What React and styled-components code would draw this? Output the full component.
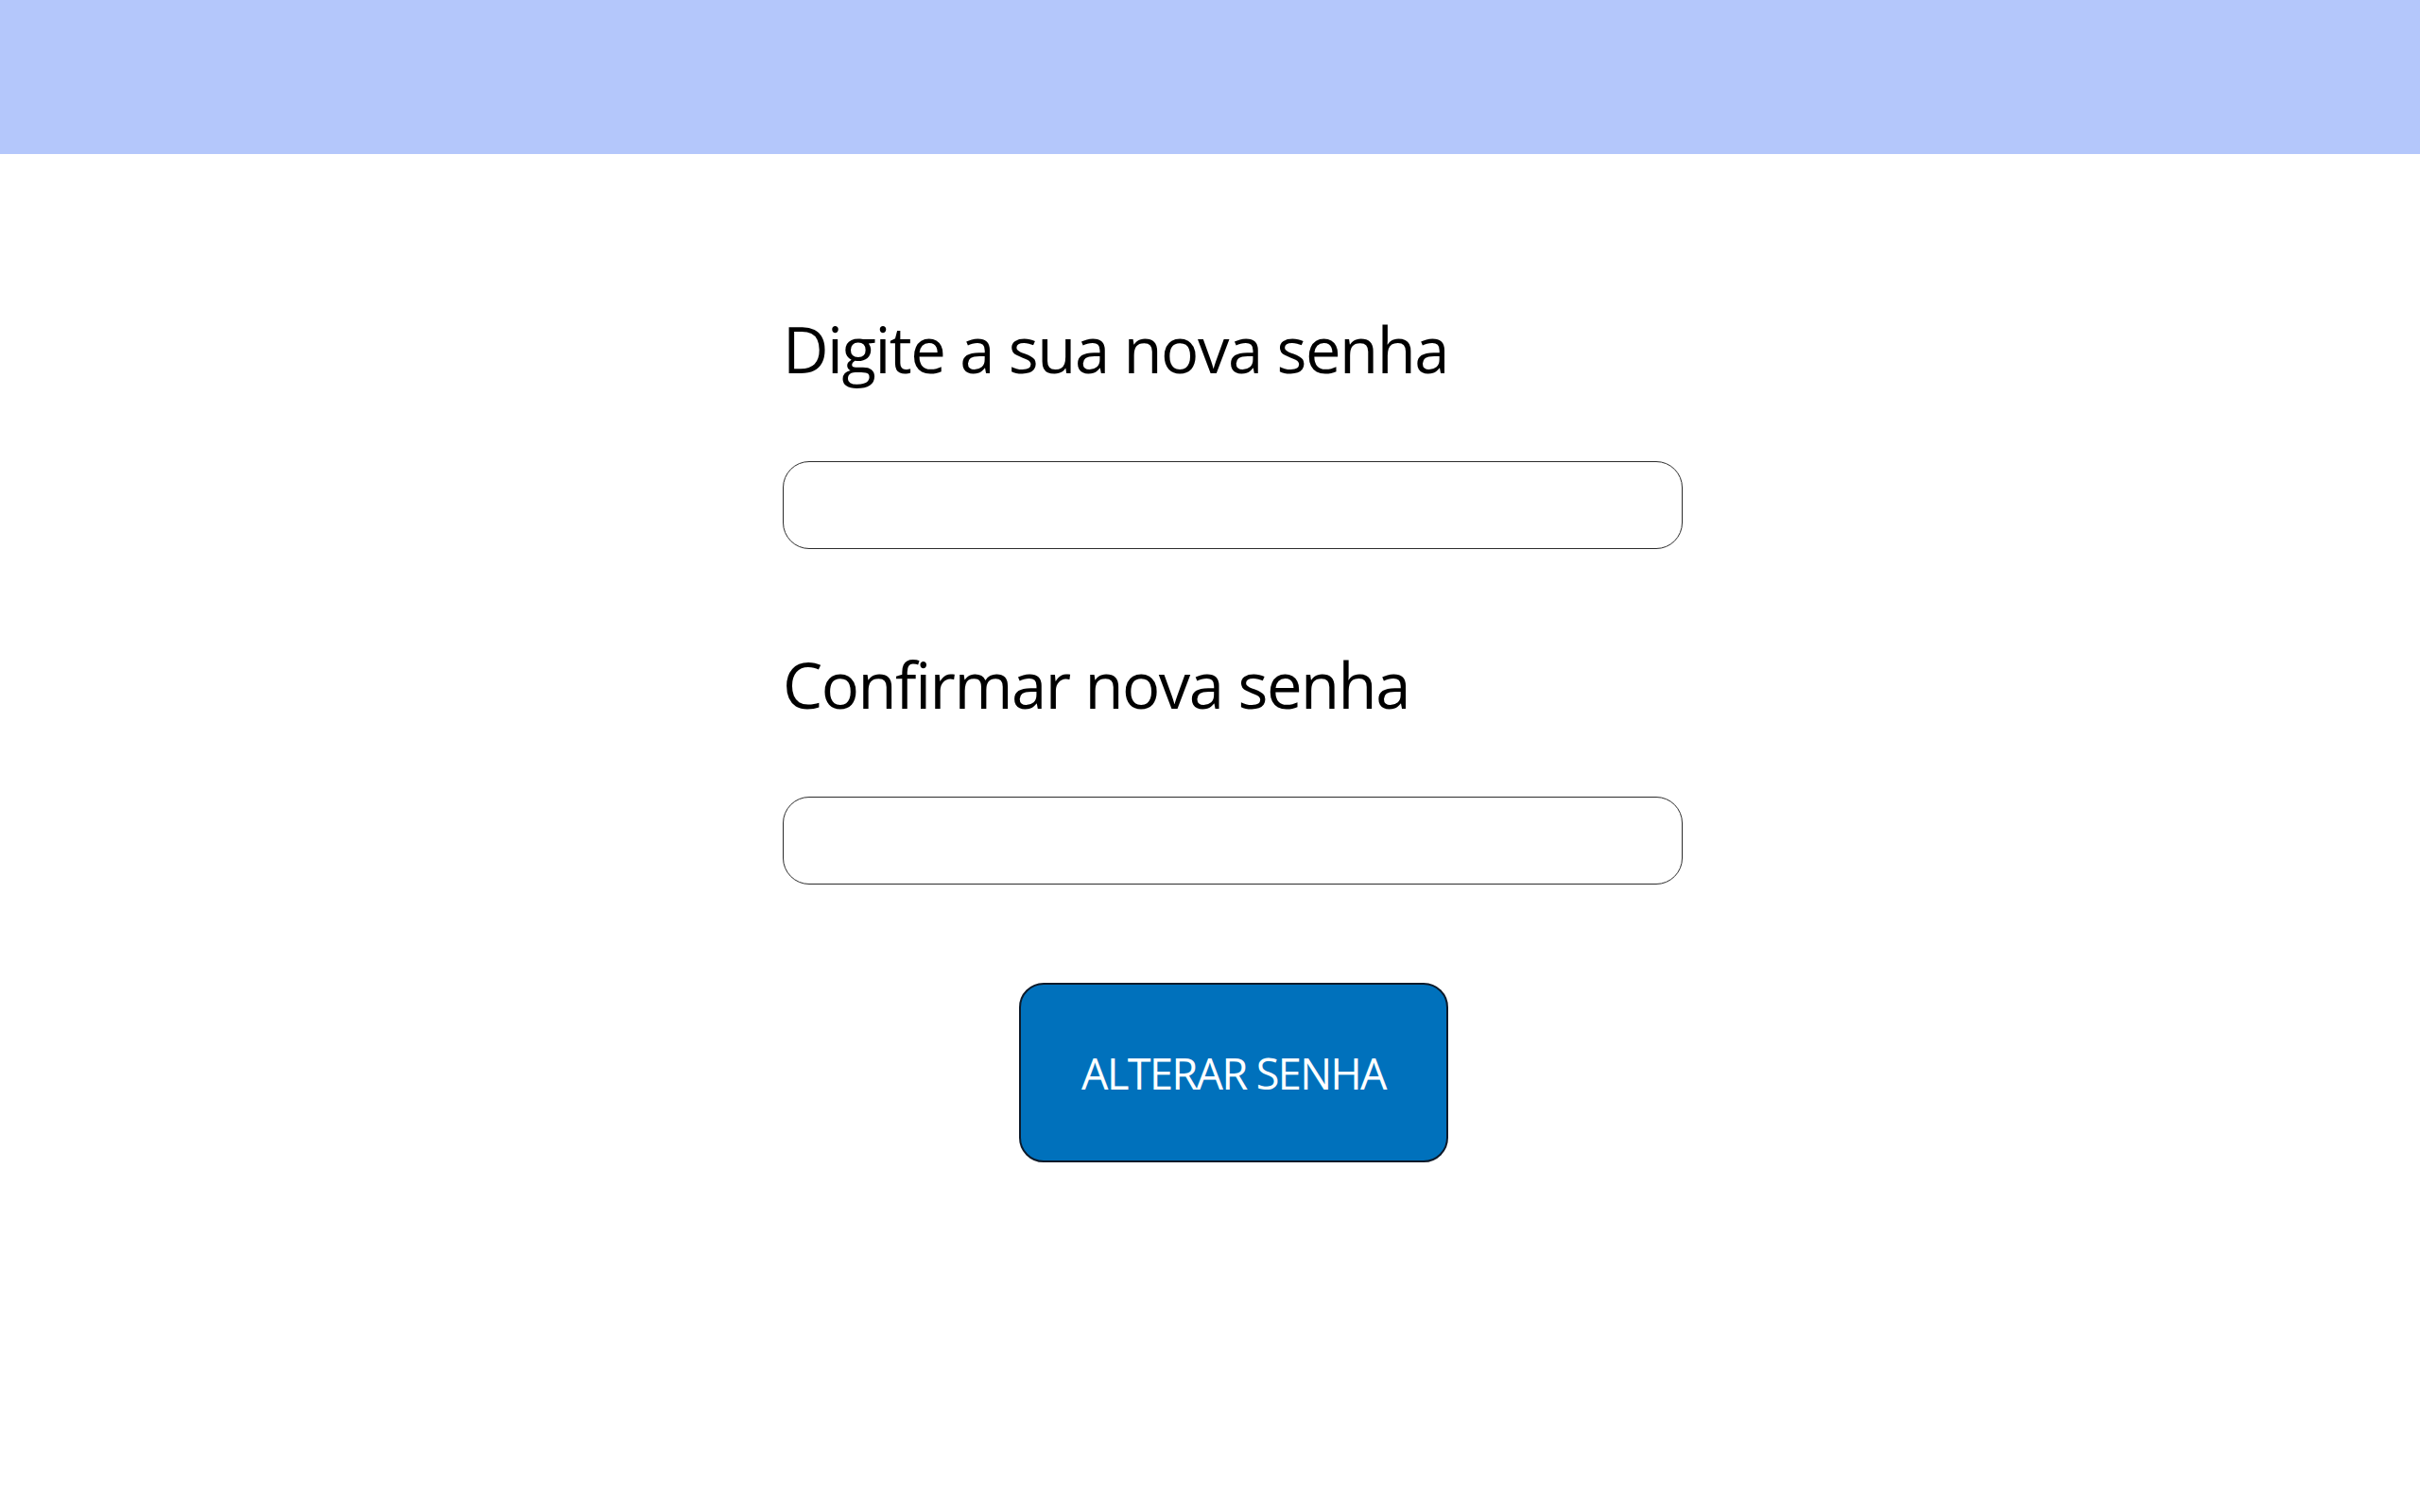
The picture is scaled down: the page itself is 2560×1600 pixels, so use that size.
import React from "react";
import styled, { createGlobalStyle } from "styled-components";

const Global = createGlobalStyle`
  html, body { margin: 0; padding: 0; background: #ffffff; }
  body { font-family: "Open Sans", "Liberation Sans", sans-serif; }
`;

const Page = styled.div`
  min-height: 1600px;
  background: #ffffff;
`;

const TopBar = styled.header`
  height: 163px;
  background: #b4c7fb;
`;

const Form = styled.form`
  width: 952px;
  margin-left: 828px;
  padding-top: 173px;
  display: flex;
  flex-direction: column;
`;

const Label = styled.label`
  display: block;
  font-family: "Open Sans", "Liberation Sans", sans-serif;
  font-size: 67px;
  line-height: 67px;
  font-weight: 400;
  color: #000000;
  letter-spacing: -1.5px;
  margin-top: ${(p) => p.$top}px;
`;

const Field = styled.input`
  box-sizing: border-box;
  width: 952px;
  height: 93px;
  margin-top: 85px;
  border: 1.5px solid #2c2c2c;
  border-radius: 28px;
  background: #ffffff;
  outline: none;
  padding: 0 28px;
  font-size: 32px;
  font-family: "Open Sans", sans-serif;
`;

const Actions = styled.div`
  display: flex;
  justify-content: center;
  margin-top: 104px;
`;

const Button = styled.button`
  box-sizing: border-box;
  width: 454px;
  height: 190px;
  margin-left: 2px;
  background: #0071bc;
  border: 2px solid #0d1a2a;
  border-radius: 26px;
  color: #ffffff;
  font-family: "Open Sans", "Liberation Sans", sans-serif;
  font-size: 45px;
  font-weight: 400;
  letter-spacing: -1.6px;
  cursor: pointer;
`;

export default function App() {
  return (
    <Page>
      <Global />
      <TopBar />
      <Form onSubmit={(e) => e.preventDefault()}>
        <Label $top={0} htmlFor="nova">Digite a sua nova senha</Label>
        <Field id="nova" type="password" />
        <Label $top={110} htmlFor="confirma">Confirmar nova senha</Label>
        <Field id="confirma" type="password" />
        <Actions>
          <Button type="submit">ALTERAR SENHA</Button>
        </Actions>
      </Form>
    </Page>
  );
}
